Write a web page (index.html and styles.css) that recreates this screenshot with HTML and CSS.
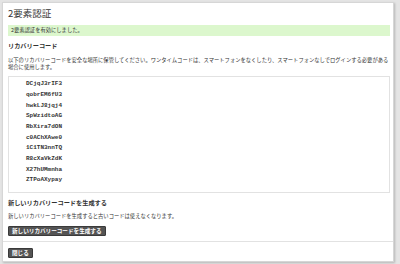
FILE: index.html
```html
<!DOCTYPE html>
<html>
<head>
	<meta charset="UTF-8">
	<title>2要素認証</title>
	<link rel="stylesheet" href="styles.css">
</head>
<body>
	<div class="modal">
		<div class="modal-body">
			<h1>2要素認証</h1>
			<div class="alert">2要素認証を有効にしました。</div>
			<h2>リカバリーコード</h2>
			<p class="note">以下のリカバリーコードを安全な場所に保管してください。ワンタイムコードは、スマートフォンをなくしたり、スマートフォンなしでログインする必要がある場合に使用します。</p>
			<ul class="codes">
				<li>DCjqJ3rIF3</li>
				<li>qobrEM6fU3</li>
				<li>hwkLJ8jqj4</li>
				<li>SpWzidtoAG</li>
				<li>RbXira7dON</li>
				<li>c0AChXAwe0</li>
				<li>1C1TN3nnTQ</li>
				<li>R8cXaVkZdK</li>
				<li>X27hUMmnha</li>
				<li>ZTPoAXypay</li>
			</ul>
			<h2 class="regen-title">新しいリカバリーコードを生成する</h2>
			<p class="note">新しいリカバリーコードを生成すると古いコードは使えなくなります。</p>
			<button class="btn btn-regen">新しいリカバリーコードを生成する</button>
		</div>
		<div class="modal-footer">
			<button class="btn">閉じる</button>
		</div>
	</div>
</body>
</html>
```

FILE: styles.css
```css
* {
	box-sizing: border-box;
}

body {
	margin: 0;
	padding: 2px 6px 2px 2px;
	height: 264px;
	background: #e4e4e4;
	font-family: "Noto Sans CJK JP", "Noto Sans", sans-serif;
	color: #333;
}

.modal {
	height: 260px;
	background: #fff;
	border: 1px solid #d6d6d6;
	box-shadow: 1px 1px 2px rgba(0, 0, 0, 0.2);
}

.modal-body {
	padding: 3px 3px 5px 5px;
}

h1 {
	margin: 0 0 5px;
	font-size: 9.5px;
	font-weight: normal;
	line-height: 14px;
}

.alert {
	background: #dcf7cd;
	padding: 0 3px;
	font-size: 5.3px;
	line-height: 11px;
	height: 11px;
}

h2 {
	margin: 4.5px 0 7px;
	font-size: 6.2px;
	line-height: 9px;
}

.note {
	margin: 0;
	font-size: 5.3px;
	line-height: 7px;
}

.codes {
	list-style: none;
	margin: 5px 0 0;
	padding: 2.7px 0 0 17px;
	border: 1px solid #e2e2e2;
	height: 117px;
}

.codes li {
	font-family: "Liberation Mono", monospace;
	font-weight: bold;
	font-size: 6px;
	line-height: 10.67px;
}

.regen-title {
	margin: 5.5px 0 6px;
}

.btn {
	display: block;
	padding: 0 3px;
	height: 10px;
	background: #545454;
	color: #fff;
	border: 1px solid #3a3a3a;
	border-radius: 1px;
	font-family: inherit;
	font-weight: bold;
	font-size: 5.6px;
	line-height: 8px;
}

.btn-regen {
	margin-top: 5.5px;
}

.modal-footer {
	border-top: 1px solid #e2e2e2;
	padding: 6px 5px 0;
}
```
